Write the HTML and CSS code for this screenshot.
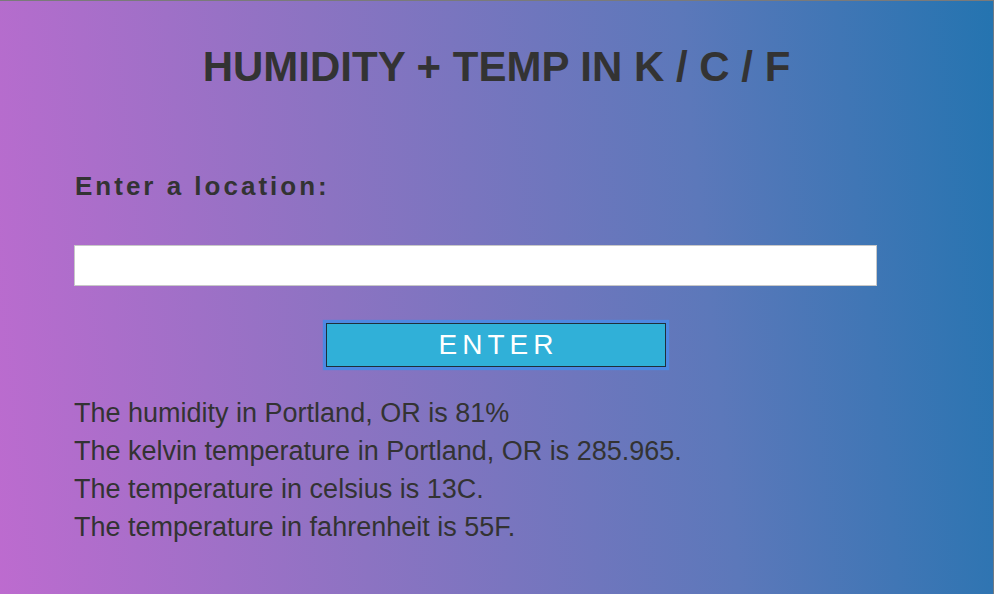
FILE: index.html
```html
<!DOCTYPE html>
<html lang="en">
<head>
<meta charset="utf-8">
<title>Humidity + Temp</title>
<link rel="stylesheet" href="styles.css">
</head>
<body>
<main class="page">
  <h1 class="title">HUMIDITY + TEMP IN K / C / F</h1>
  <form class="search">
    <label class="label" for="location">Enter a location:</label>
    <input class="field" id="location" type="text">
    <div class="actions">
      <button class="btn" type="button">ENTER</button>
    </div>
  </form>
  <div class="results">
    <p class="line">The humidity in Portland, OR is 81%</p>
    <p class="line">The kelvin temperature in Portland, OR is 285.965.</p>
    <p class="line">The temperature in celsius is 13C.</p>
    <p class="line">The temperature in fahrenheit is 55F.</p>
  </div>
</main>
</body>
</html>
```
FILE: styles.css
```css
html, body {
  margin: 0;
  height: 100%;
}
body {
  background: linear-gradient(84deg, #bd6bcf 0%, #8c73c2 35%, #5c78ba 70%, #2474b0 100%);
  border-top: 1px solid #7a7a7a;
  border-right: 1px solid #6f7a84;
  box-sizing: border-box;
  font-family: "Liberation Sans", Arial, sans-serif;
  color: #333;
  overflow: hidden;
}
.page {
  padding: 0 116px 0 74px;
}
.title {
  margin: 0 -116px 0 -74px;
  padding-top: 42px;
  text-align: center;
  font-size: 42px;
  font-weight: bold;
  line-height: 48px;
  color: #333;
}
.search {
  display: flex;
  flex-direction: column;
}
.label {
  margin-top: 80px;
  font-size: 26px;
  font-weight: bold;
  letter-spacing: 3px;
  line-height: 30px;
  padding-left: 1px;
}
.field {
  margin-top: 44px;
  height: 41px;
  box-sizing: border-box;
  border: 1px solid #c8c8c8;
  background: #fff;
  width: 803px;
  padding: 0 8px;
  font-size: 18px;
}
.actions {
  display: flex;
  justify-content: center;
  margin-top: 37px;
  padding-left: 41px;
}
.btn {
  width: 340px;
  height: 44px;
  box-sizing: border-box;
  background: #30b0d8;
  border: 1px solid #1f2f3a;
  box-shadow: 0 0 1px 3px #4d88e2;
  color: #fff;
  font-family: "Liberation Sans", Arial, sans-serif;
  font-size: 28px;
  letter-spacing: 5px;
  padding: 0 0 0 5px;
  line-height: 1;
}
.results {
  margin-top: 27px;
}
.line {
  margin: 0;
  font-size: 27px;
  line-height: 38px;
  color: #333;
}
```
